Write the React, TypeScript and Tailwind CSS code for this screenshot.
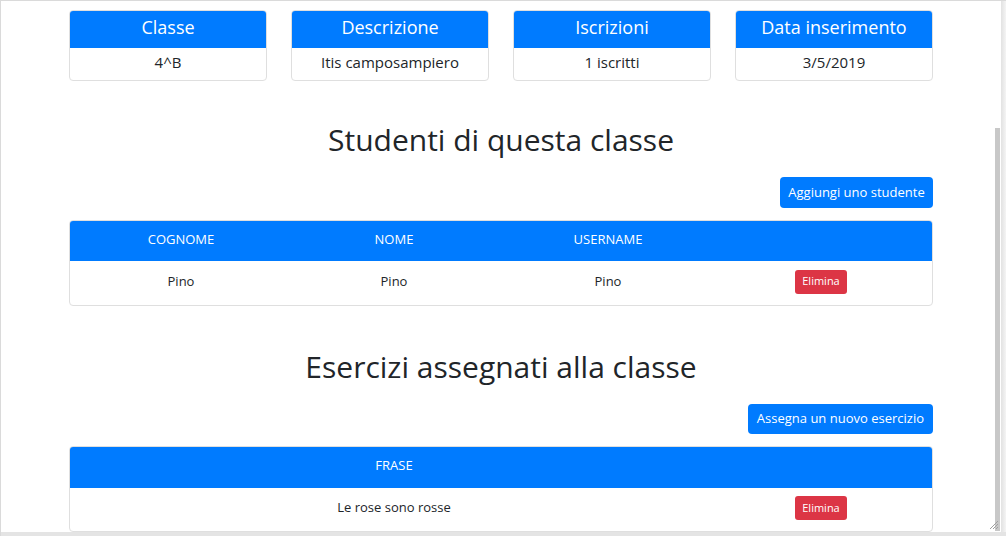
import React from "react";

const font = { fontFamily: '"Open Sans", "Noto Sans", sans-serif' };

interface InfoCardProps {
  title: string;
  value: string;
}

function InfoCard({ title, value }: InfoCardProps) {
  return (
    <div className="w-[198px] rounded border border-[#dfdfdf] overflow-hidden">
      <div className="h-[37px] pb-[4px] bg-[#007bff] text-white text-[18px] flex items-center justify-center">
        {title}
      </div>
      <div className="h-[32px] pb-[4px] flex items-center justify-center text-[15px] text-[#212529]">
        {value}
      </div>
    </div>
  );
}

function DeleteButton() {
  return (
    <button className="h-[24px] w-[52px] rounded-[3px] bg-[#dc3545] text-white text-[11px]">
      Elimina
    </button>
  );
}

const cols = "grid grid-cols-[222px_204px_224px_1fr] items-center text-center";

export default function App() {
  return (
    <div
      className="w-[1006px] h-[536px] bg-white flex flex-col overflow-hidden border-t border-l border-[#dadada]"
      style={font}
    >
      <div className="flex flex-1 min-h-0">
        <div className="relative flex-1 flex justify-center">
          <div className="w-[864px] flex flex-col pt-[9px]">
            <div className="flex justify-between">
              <InfoCard title="Classe" value="4^B" />
              <InfoCard title="Descrizione" value="Itis camposampiero" />
              <InfoCard title="Iscrizioni" value="1 iscritti" />
              <InfoCard title="Data inserimento" value="3/5/2019" />
            </div>

            <h2 className="mt-[40px] h-[38px] leading-[38px] text-center text-[30px] text-[#212529]">
              Studenti di questa classe
            </h2>
            <div className="mt-[18px] flex justify-end">
              <button className="h-[31px] w-[153px] pt-[1px] rounded bg-[#007bff] text-white text-[13px]">
                Aggiungi uno studente
              </button>
            </div>
            <div className="mt-[12px] rounded border border-[#dfdfdf] overflow-hidden">
              <div className={`h-[40px] pb-[2px] bg-[#007bff] text-white text-[13px] ${cols}`}>
                <div>COGNOME</div>
                <div>NOME</div>
                <div>USERNAME</div>
                <div />
              </div>
              <div className={`h-[44px] pb-[3px] text-[13px] text-[#212529] ${cols}`}>
                <div>Pino</div>
                <div>Pino</div>
                <div>Pino</div>
                <div className="flex justify-center pr-[10px]">
                  <DeleteButton />
                </div>
              </div>
            </div>

            <h2 className="mt-[42px] h-[38px] leading-[38px] text-center text-[30px] text-[#212529]">
              Esercizi assegnati alla classe
            </h2>
            <div className="mt-[18px] flex justify-end">
              <button className="h-[30px] px-[9px] pt-[1px] rounded bg-[#007bff] text-white text-[13px]">
                Assegna un nuovo esercizio
              </button>
            </div>
            <div className="mt-[12px] rounded border border-[#dfdfdf] overflow-hidden">
              <div className={`h-[41px] pb-[2px] bg-[#007bff] text-white text-[13px] ${cols}`}>
                <div />
                <div>FRASE</div>
                <div />
                <div />
              </div>
              <div className={`h-[44px] pb-[3px] text-[13px] text-[#212529] ${cols}`}>
                <div />
                <div>Le rose sono rosse</div>
                <div />
                <div className="flex justify-center pr-[10px]">
                  <DeleteButton />
                </div>
              </div>
            </div>
          </div>

          <div className="absolute right-[1px] top-[127px] w-[5px] h-[403px] bg-[#c8c8c8]" />
          <svg
            className="absolute right-[2px] bottom-[2px]"
            width="11"
            height="11"
            viewBox="0 0 11 11"
          >
            <line x1="10" y1="2" x2="2" y2="10" stroke="#a0a0a0" strokeWidth="1" />
            <line x1="10" y1="5" x2="5" y2="10" stroke="#a0a0a0" strokeWidth="1" />
            <line x1="10" y1="8" x2="8" y2="10" stroke="#a0a0a0" strokeWidth="1" />
          </svg>
        </div>
        <div className="w-[5px] bg-gradient-to-r from-[#e2e2e2] to-[#f4f4f4]" />
      </div>
      <div className="h-[4px] bg-[#e4e4e4]" />
    </div>
  );
}
